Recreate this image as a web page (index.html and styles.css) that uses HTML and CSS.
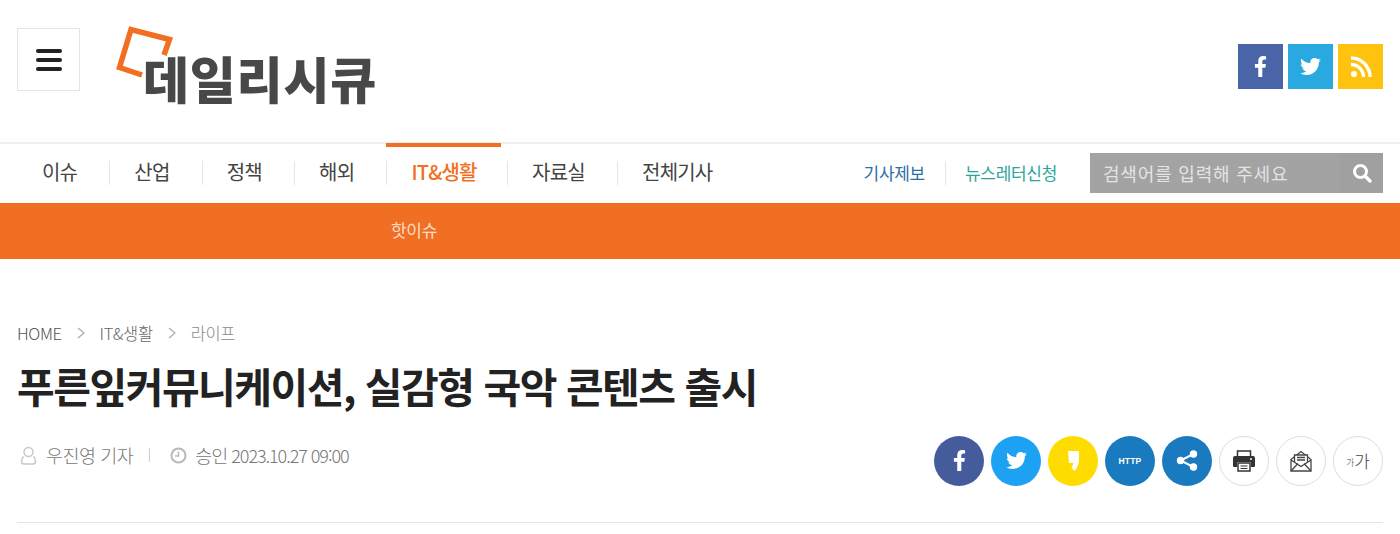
FILE: index.html
```html
<!DOCTYPE html>
<html lang="ko">
<head>
  <meta charset="utf-8">
  <title>푸른잎커뮤니케이션, 실감형 국악 콘텐츠 출시 - 데일리시큐</title>
  <link rel="stylesheet" href="styles.css">
</head>
<body>

<div class="top">
  <a class="menu-btn" href="#"><span></span><span></span><span></span></a>
  <a class="logo" href="#">
    <svg class="logo-mark" width="62" height="62" viewBox="0 0 62 62"><path d="M48 29 L53.500 13.500 L15 3.500 L3.500 41.500 L26 49" fill="none" stroke="#f26f21" stroke-width="5.500"/></svg>
    <span class="logo-text">데일리시큐</span>
  </a>
  <div class="sns">
    <a class="sns-fb" href="#"><svg width="13" height="21" viewBox="0 0 320 512"><path fill="#fff" d="M279.14 288l14.22-92.66h-88.91v-60.13c0-25.35 12.42-50.06 52.24-50.06h40.42V6.26S260.43 0 225.36 0c-73.22 0-121.08 44.38-121.08 124.72v70.62H22.89V288h81.39v224h100.17V288z"/></svg></a>
    <a class="sns-tw" href="#"><svg width="21" height="21" viewBox="0 0 512 512"><path fill="#fff" d="M459.37 151.716c.325 4.548.325 9.097.325 13.645 0 138.72-105.583 298.558-298.558 298.558-59.452 0-114.68-17.219-161.137-47.106 8.447.974 16.568 1.299 25.34 1.299 49.055 0 94.213-16.568 130.274-44.832-46.132-.975-84.792-31.188-98.112-72.772 6.498.974 12.995 1.624 19.818 1.624 9.421 0 18.843-1.3 27.614-3.573-48.081-9.747-84.143-51.98-84.143-102.985v-1.299c13.969 7.797 30.214 12.67 47.431 13.319-28.264-18.843-46.781-51.005-46.781-87.391 0-19.492 5.197-37.36 14.294-52.954 51.655 63.675 129.3 105.258 216.365 109.807-1.624-7.797-2.599-15.918-2.599-24.04 0-57.828 46.782-104.934 104.934-104.934 30.213 0 57.502 12.67 76.67 33.137 23.715-4.548 46.456-13.32 66.599-25.34-7.798 24.366-24.366 44.833-46.132 57.827 21.117-2.273 41.584-8.122 60.426-16.243-14.292 20.791-32.161 39.308-52.628 54.253z"/></svg></a>
    <a class="sns-rss" href="#"><svg width="22" height="22" viewBox="0 0 22 22"><circle cx="4" cy="18" r="3" fill="#fff"/><path d="M1 8.500a12.500 12.500 0 0 1 12.500 12.500M1 2a19 19 0 0 1 19 19" fill="none" stroke="#fff" stroke-width="3.400"/></svg></a>
  </div>
</div>

<div class="nav">
  <ul class="gnb">
    <li><a href="#">이슈</a></li>
    <li><a href="#">산업</a></li>
    <li><a href="#">정책</a></li>
    <li><a href="#">해외</a></li>
    <li class="on"><a href="#">IT&amp;생활</a></li>
    <li><a href="#">자료실</a></li>
    <li><a href="#">전체기사</a></li>
  </ul>
  <div class="nav-links">
    <a class="link-tip" href="#">기사제보</a>
    <a class="link-news" href="#">뉴스레터신청</a>
  </div>
  <div class="search">
    <span class="search-text">검색어를 입력해 주세요</span>
    <span class="search-btn"><svg width="20" height="20" viewBox="0 0 20 20"><circle cx="8.500" cy="8.500" r="6" fill="none" stroke="#fff" stroke-width="3"/><path d="M13 13l5 5" stroke="#fff" stroke-width="3.400" stroke-linecap="round"/></svg></span>
  </div>
</div>

<div class="subnav"><a href="#">핫이슈</a></div>

<div class="article-head">
  <div class="crumbs">
    <span class="crumb-home">HOME</span>
    <svg class="crumb-arrow" width="8" height="12" viewBox="0 0 8 12"><path d="M1 1l6 5-6 5" fill="none" stroke="#aaa" stroke-width="1.200"/></svg>
    <span>IT&amp;생활</span>
    <svg class="crumb-arrow" width="8" height="12" viewBox="0 0 8 12"><path d="M1 1l6 5-6 5" fill="none" stroke="#aaa" stroke-width="1.200"/></svg>
    <span class="crumb-last">라이프</span>
  </div>
  <h1>푸른잎커뮤니케이션, 실감형 국악 콘텐츠 출시</h1>
  <div class="meta">
    <div class="info">
      <svg class="icon-user" width="17" height="19" viewBox="0 0 17 19"><circle cx="8.500" cy="6" r="4.500" fill="none" stroke="#c8c8c8" stroke-width="1.500"/><path d="M3.500 10.500C2 12 1.500 14 1.500 15.500c0 1.500 1 2.500 2.500 2.500h9c1.500 0 2.500-1 2.500-2.500 0-1.500-.5-3.500-2-5" fill="none" stroke="#c8c8c8" stroke-width="1.500"/></svg>
      <span class="writer">우진영 기자</span>
      <i class="bar"></i>
      <svg width="17" height="17" viewBox="0 0 17 17"><circle cx="8.500" cy="8.500" r="7" fill="none" stroke="#b8b8b8" stroke-width="2"/><path d="M8.500 4.500v4.500H5" fill="none" stroke="#b8b8b8" stroke-width="1.500"/></svg>
      <span class="date"><em>승인</em> 2023.10.27 09:00</span>
    </div>
    <div class="tools">
      <a class="tool t-fb" href="#"><svg width="13" height="21" viewBox="0 0 320 512"><path fill="#fff" d="M279.14 288l14.22-92.66h-88.91v-60.13c0-25.35 12.42-50.06 52.24-50.06h40.42V6.26S260.43 0 225.36 0c-73.22 0-121.08 44.38-121.08 124.72v70.62H22.89V288h81.39v224h100.17V288z"/></svg></a>
      <a class="tool t-tw" href="#"><svg width="21" height="21" viewBox="0 0 512 512"><path fill="#fff" d="M459.37 151.716c.325 4.548.325 9.097.325 13.645 0 138.72-105.583 298.558-298.558 298.558-59.452 0-114.68-17.219-161.137-47.106 8.447.974 16.568 1.299 25.34 1.299 49.055 0 94.213-16.568 130.274-44.832-46.132-.975-84.792-31.188-98.112-72.772 6.498.974 12.995 1.624 19.818 1.624 9.421 0 18.843-1.3 27.614-3.573-48.081-9.747-84.143-51.98-84.143-102.985v-1.299c13.969 7.797 30.214 12.67 47.431 13.319-28.264-18.843-46.781-51.005-46.781-87.391 0-19.492 5.197-37.36 14.294-52.954 51.655 63.675 129.3 105.258 216.365 109.807-1.624-7.797-2.599-15.918-2.599-24.04 0-57.828 46.782-104.934 104.934-104.934 30.213 0 57.502 12.67 76.67 33.137 23.715-4.548 46.456-13.32 66.599-25.34-7.798 24.366-24.366 44.833-46.132 57.827 21.117-2.273 41.584-8.122 60.426-16.243-14.292 20.791-32.161 39.308-52.628 54.253z"/></svg></a>
      <a class="tool t-ks" href="#"><svg width="11" height="20" viewBox="0 0 11 20"><path fill="#fff" d="M0 0h11v9c0 4.500-2 8-4.500 11L3.500 17 5.500 12H1z"/></svg></a>
      <a class="tool t-url" href="#"><span>HTTP</span></a>
      <a class="tool t-share" href="#"><svg width="22" height="21" viewBox="0 0 22 21"><path d="M17.500 4L4.500 10.500l13 6.500" fill="none" stroke="#fff" stroke-width="2"/><circle cx="17.500" cy="4" r="3.700" fill="#fff"/><circle cx="4.500" cy="10.500" r="3.700" fill="#fff"/><circle cx="17.500" cy="17" r="3.700" fill="#fff"/></svg></a>
      <a class="tool t-line" href="#"><svg width="22" height="22" viewBox="0 0 22 22"><path d="M4.500 6V1h13v5" fill="none" stroke="#333" stroke-width="1.500"/><path fill="#333" d="M2 6h18a2 2 0 0 1 2 2v8a1 1 0 0 1-1 1h-3v-5H4v5H1a1 1 0 0 1-1-1V8a2 2 0 0 1 2-2z"/><rect x="5" y="13" width="12" height="8" fill="#fff" stroke="#333" stroke-width="1.500"/><path d="M7.500 16h7M7.500 18.500h7" stroke="#333"/><circle cx="18" cy="9" r="1" fill="#fff"/></svg></a>
      <a class="tool t-line" href="#"><svg width="22" height="22" viewBox="0 0 22 22"><path d="M1 9.500L11 1.500l10 8V21H1z" fill="none" stroke="#444" stroke-width="1.300"/><path d="M4.500 12V5h13v7" fill="#fff" stroke="#444" stroke-width="1.300"/><path d="M7 7.500h8M7 10h8" stroke="#444" stroke-width="1.300"/><path d="M1 10l10 6.500L21 10M1 21l7-7.500M21 21l-7-7.500" fill="none" stroke="#444" stroke-width="1.300"/></svg></a>
      <a class="tool t-line t-font" href="#"><small>가</small>가</a>
    </div>
  </div>
</div>

</body>
</html>
```

FILE: styles.css
```css
body{margin:0; background:#fff; color:#333; font-family:"Noto Sans CJK KR","Noto Sans",sans-serif; font-size:16px;}
a{color:inherit; text-decoration:none;}
ul{margin:0; padding:0; list-style:none;}

.top{display:flex; height:114px; padding:28px 17px 0; border-bottom:2px solid #eee;}
.menu-btn{display:flex; flex-direction:column; gap:5px; justify-content:center; align-items:center; width:61px; height:61px; border:1px solid #e4e4e4;}
.menu-btn span{display:block; width:26px; height:4px; background:#222; border-radius:2px;}
.logo{position:relative; display:block; width:262px; height:86px; margin-left:35px;}
.logo-mark{position:absolute; left:1px; top:-2px;}
.logo-text{position:absolute; left:28px; top:14px; font-size:50px; line-height:70px; font-weight:900; color:#484848; letter-spacing:.8px; white-space:nowrap;}
.sns{display:flex; gap:5px; margin:16px 0 0 auto;}
.sns a{display:flex; justify-content:center; align-items:center; width:45px; height:45px;}
.sns-fb{background:#4a64a8;}
.sns-tw{background:#2aa9e0;}
.sns-rss{background:#ffc20e;}

.nav{display:flex; align-items:center; height:57px; padding:0 17px 2px;}
.gnb{display:flex; align-items:center; height:100%; padding-left:1px;}
.gnb li{position:relative; height:24px; padding:0 32.150px 0 24px; border-right:1px solid #e6e6e6; font-size:20px; line-height:22px; color:#444; letter-spacing:-.8px;}
.gnb li:last-child{border-right:0;}
.gnb .on{padding-right:30.400px; color:#f26f21; font-weight:500;}
.gnb .on:before{content:""; position:absolute; left:-1px; top:-18px; width:115px; height:4px; background:#f26f21;}
.nav-links{display:flex; align-items:center; margin-left:auto; font-size:17px; letter-spacing:-.3px;}
.link-tip{padding-right:20px; border-right:1px solid #e6e6e6; line-height:24px; color:#2c6ea6;}
.link-news{padding-left:19px; color:#2ba59b;}
.search{display:flex; align-items:center; justify-content:space-between; width:293px; height:40px; margin-left:33px; background:#a3a3a3;}
.search-text{padding-left:13px; font-size:18px; letter-spacing:.8px; color:#e4e4e4;}
.search-btn{display:flex; justify-content:center; align-items:center; width:43px; height:40px; background:#a0a0a0;}

.subnav{height:56px; padding-left:391px; background:#f16f23; color:#fcdcc8; font-size:17px; line-height:54px; letter-spacing:-.3px;}

.article-head{margin:0 17px; padding-top:62px; height:201px; border-bottom:1px solid #e5e5e5;}
.crumbs{display:flex; align-items:center; gap:14px; height:24px; font-size:16.500px; font-weight:300; color:#666; letter-spacing:-.4px;}
.crumb-home{color:#555;}
.crumb-last{color:#888;}
.crumb-arrow{margin:0 1px;}
h1{margin:12px 0 0; font-size:41px; line-height:56px; font-weight:700; color:#222; letter-spacing:-1.500px;}
.meta{display:flex; justify-content:space-between; align-items:center; height:51px; margin-top:22px;}
.info{display:flex; align-items:center; margin-bottom:11px; font-size:18.500px; font-weight:300; color:#777; letter-spacing:-.5px;}
.icon-user{margin-left:3px;}
.writer{margin-left:9px;}
.bar{width:1px; height:14px; margin:0 20px 0 16px; background:#ccc;}
.date{margin-left:8px; font-size:18px; letter-spacing:-1.050px;}
.date em{font-style:normal; font-size:18.500px;}
.tools{display:flex; gap:7px;}
.tool{display:flex; justify-content:center; align-items:center; box-sizing:border-box; width:50px; height:50px; border-radius:50%;}
.t-fb{background:#445c9c;}
.t-tw{background:#1da1f2;}
.t-ks{background:#ffdc00;}
.t-url{background:#1a7ac0;}
.t-url span{font-family:"Liberation Sans",sans-serif; font-size:8.500px; font-weight:700; letter-spacing:.2px; color:#fff;}
.t-share{background:#1a7ac0;}
.t-line{border:1px solid #ddd;}
.t-font{font-size:17px; font-weight:300; color:#444;}
.t-font small{font-size:9px; margin-top:4px;}
```
